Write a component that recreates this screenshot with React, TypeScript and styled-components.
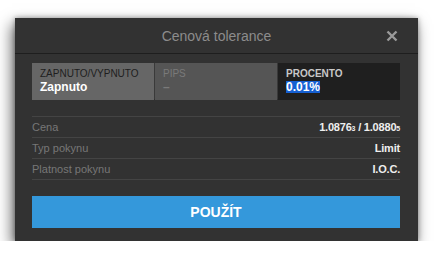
import React from 'react';
import styled, { createGlobalStyle } from 'styled-components';

const GlobalStyle = createGlobalStyle`
  html, body {
    margin: 0;
    padding: 0;
    background: #ffffff;
    font-family: "Liberation Sans", Arial, sans-serif;
  }
`;

const Page = styled.div`
  padding: 18px 0 0 15px;
`;

const Dialog = styled.div`
  width: 403px;
  height: 223px;
  box-sizing: border-box;
  background: #323232;
  box-shadow: -3px 6px 14px rgba(0, 0, 0, 0.6), 0 0 5px rgba(0, 0, 0, 0.35);
  display: flex;
  flex-direction: column;
`;

const Header = styled.div`
  height: 35px;
  border-bottom: 1px solid #1e1e1e;
  display: flex;
  align-items: center;
  justify-content: center;
  position: relative;
`;

const Title = styled.div`
  font-size: 14px;
  color: #8c8c8c;
`;

const Close = styled.button`
  position: absolute;
  right: 20px;
  top: 12px;
  width: 12px;
  height: 12px;
  padding: 0;
  border: 0;
  background: none;
  display: flex;
`;

const Body = styled.div`
  padding: 9px 18px 0 17px;
  display: flex;
  flex-direction: column;
`;

const Segments = styled.div`
  display: grid;
  grid-template-columns: 1fr 1fr 1fr;
  gap: 1px;
  height: 36px;
  background: #3a3a3a;
`;

const Segment = styled.div<{ $tone: 'on' | 'off' | 'active' }>`
  padding: 5px 8px;
  background: ${(p) => (p.$tone === 'on' ? '#666666' : p.$tone === 'off' ? '#555555' : '#1f1f1f')};
  display: flex;
  flex-direction: column;
`;

const SegLabel = styled.div<{ $tone: 'on' | 'off' | 'active' }>`
  font-size: 10px;
  line-height: 12px;
  font-weight: ${(p) => (p.$tone === 'active' ? 700 : 400)};
  color: ${(p) => (p.$tone === 'on' ? '#1e1e1e' : p.$tone === 'off' ? '#7a7a7a' : '#c8c8c8')};
`;

const SegValue = styled.div<{ $tone: 'on' | 'off' | 'active' }>`
  font-size: 12px;
  line-height: 15px;
  font-weight: 700;
  color: ${(p) => (p.$tone === 'off' ? '#7a7a7a' : '#ffffff')};
`;

const Selected = styled.span`
  display: inline-block;
  background: #1660d2;
  line-height: 12px;
  height: 12px;
  margin-top: 1px;
`;

const Details = styled.div`
  margin-top: 17px;
  border-top: 1px solid #444;
`;

const Row = styled.div`
  height: 20px;
  border-bottom: 1px solid #444;
  display: flex;
  align-items: center;
  justify-content: space-between;
`;

const RowLabel = styled.span`
  font-size: 11px;
  color: #777777;
`;

const RowValue = styled.span`
  font-size: 11px;
  font-weight: 700;
  color: #eeeeee;
  letter-spacing: -0.2px;

  sub {
    font-size: 7px;
    vertical-align: baseline;
  }
`;

const Apply = styled.button`
  margin-top: 16px;
  height: 32px;
  border: 0;
  background: #3498db;
  color: #ffffff;
  font-family: "Liberation Sans", Arial, sans-serif;
  font-size: 14px;
  font-weight: 700;
`;

export default function App() {
  return (
    <Page>
      <GlobalStyle />
      <Dialog>
        <Header>
          <Title>Cenová tolerance</Title>
          <Close>
            <svg width="12" height="12" viewBox="0 0 12 12">
              <path d="M1.5 1.5 L10.5 10.5 M10.5 1.5 L1.5 10.5" stroke="#9a9a9a" strokeWidth="2.4" />
            </svg>
          </Close>
        </Header>
        <Body>
          <Segments>
            <Segment $tone="on">
              <SegLabel $tone="on">ZAPNUTO/VYPNUTO</SegLabel>
              <SegValue $tone="on">Zapnuto</SegValue>
            </Segment>
            <Segment $tone="off">
              <SegLabel $tone="off">PIPS</SegLabel>
              <SegValue $tone="off">–</SegValue>
            </Segment>
            <Segment $tone="active">
              <SegLabel $tone="active">PROCENTO</SegLabel>
              <SegValue $tone="active">
                <Selected>0.01%</Selected>
              </SegValue>
            </Segment>
          </Segments>
          <Details>
            <Row>
              <RowLabel>Cena</RowLabel>
              <RowValue>
                1.0876<sub>3</sub> / 1.0880<sub>5</sub>
              </RowValue>
            </Row>
            <Row>
              <RowLabel>Typ pokynu</RowLabel>
              <RowValue>Limit</RowValue>
            </Row>
            <Row>
              <RowLabel>Platnost pokynu</RowLabel>
              <RowValue>I.O.C.</RowValue>
            </Row>
          </Details>
          <Apply>POUŽÍT</Apply>
        </Body>
      </Dialog>
    </Page>
  );
}
